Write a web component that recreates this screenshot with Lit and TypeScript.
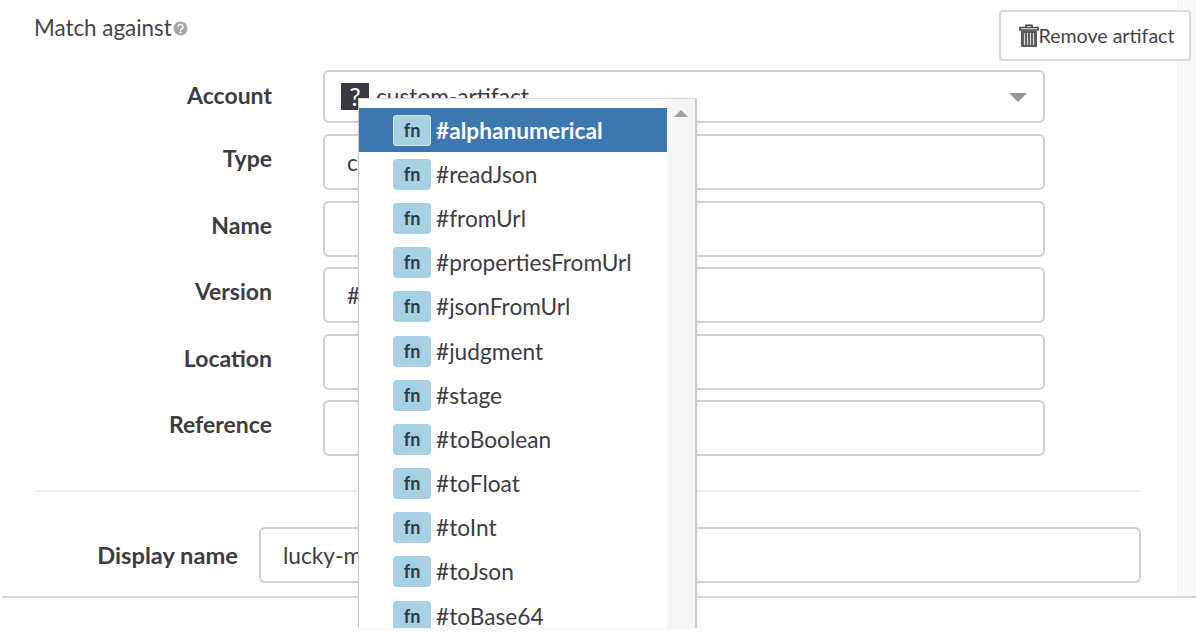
import { LitElement, html, css } from 'lit';
import { customElement } from 'lit/decorators.js';

const FIELDS = [
  { label: 'Type', value: 'c' },
  { label: 'Name', value: '' },
  { label: 'Version', value: '#' },
  { label: 'Location', value: '' },
  { label: 'Reference', value: '' },
];

const OPTIONS = [
  'alphanumerical',
  'readJson',
  'fromUrl',
  'propertiesFromUrl',
  'jsonFromUrl',
  'judgment',
  'stage',
  'toBoolean',
  'toFloat',
  'toInt',
  'toJson',
  'toBase64',
];

@customElement('app-root')
export class AppRoot extends LitElement {
  static styles = css`
    :host {
      display: block;
      position: relative;
      height: 632px;
      overflow: hidden;
      background: #fff;
      color: #3f3b42;
      font-family: 'Lato', 'Noto Sans', sans-serif;
      font-size: 22.7px;
    }

    .page {
      box-sizing: border-box;
      height: 598px;
      margin: 0 4px 0 2px;
      border-bottom: 2px solid #d9d7d5;
      display: flex;
    }

    .content {
      width: 1175px;
      box-sizing: border-box;
      padding: 10px 0 0 32px;
    }

    .gutter {
      width: 19px;
      background: #f7f7f7;
      border-left: 1px solid #efefef;
      box-sizing: border-box;
    }

    /* the remove button sits over the gutter */
    .header {
      position: relative;
      z-index: 1;
      display: flex;
      justify-content: space-between;
      align-items: flex-start;
      height: 60px;
      margin-right: -14px;
    }

    .title {
      display: flex;
      align-items: center;
      gap: 1px;
      margin-top: 6px;
      font-size: 22.4px;
      line-height: 24px;
      color: #46434a;
    }

    .remove {
      box-sizing: border-box;
      width: 192px;
      height: 51px;
      display: flex;
      align-items: center;
      justify-content: center;
      background: #fff;
      border: 2px solid #dcdad8;
      border-radius: 4px;
      font: inherit;
      font-size: 19.6px;
      color: #46434a;
      padding: 0 0 0 3px;
    }

    .form {
      display: flex;
      flex-direction: column;
      gap: 10.5px;
      padding-right: 132px;
    }

    .row {
      display: flex;
      align-items: center;
      height: 56px;
      gap: 51px;
    }

    .row.account {
      height: 53px;
      margin-bottom: 0.5px;
    }

    .label {
      width: 238px;
      box-sizing: border-box;
      padding-bottom: 8px;
      text-align: right;
      font-weight: 700;
      font-size: 23px;
    }

    .account .label {
      padding-bottom: 4px;
    }

    .control {
      flex: 1;
      box-sizing: border-box;
      height: 100%;
      display: flex;
      align-items: center;
      gap: 7px;
      padding-left: 22px;
      background: #fff;
      border: 2px solid #d3d1cf;
      border-radius: 6px;
    }

    .account .control {
      padding-left: 16px;
      padding-right: 16px;
    }

    .unknown {
      width: 28px;
      height: 27px;
      background: #3d3940;
      color: #fff;
      font-size: 25px;
      line-height: 26px;
      text-align: center;
    }

    .caret {
      margin: 2px 0 0 auto;
      width: 0;
      height: 0;
      border-left: 9px solid transparent;
      border-right: 9px solid transparent;
      border-top: 9px solid #9a9794;
    }

    hr {
      margin: 34px 36px 0 0;
      height: 2px;
      border: 0;
      background: #f1f0ef;
    }

    .row.display {
      margin-top: 35px;
      margin-right: 36px;
      gap: 21px;
    }

    .display .label {
      width: 204px;
      padding-bottom: 0;
      font-size: 23.7px;
    }

    .menu {
      position: absolute;
      left: 358px;
      top: 98px;
      width: 339px;
      height: 530px;
      box-sizing: border-box;
      display: flex;
      overflow: hidden;
      background: #fff;
      border: 2px solid #cfccca;
      border-top: 1px solid #dedcda;
      border-bottom: 0;
      border-left-width: 1px;
      box-shadow: 0 0 4px rgba(0, 0, 0, 0.08);
    }

    .options {
      width: 308px;
      flex: none;
      padding-top: 9px;
    }

    .option {
      height: 44.2px;
      display: flex;
      align-items: center;
      gap: 5px;
      padding-left: 34px;
      box-sizing: border-box;
    }

    .option.active {
      background: #3b77b1;
      color: #fff;
      font-weight: 700;
    }

    .fn {
      width: 38px;
      height: 31px;
      flex: none;
      border-radius: 4px;
      background: #a6d1e3;
      color: #2f3a4a;
      font-size: 18px;
      font-weight: 700;
      line-height: 31px;
      text-align: center;
    }

    .active .fn {
      box-shadow: inset 0 0 0 1px #cfe3ee;
    }

    .scroll {
      flex: 1;
      background: #f5f5f5;
      display: flex;
      justify-content: center;
      padding-top: 11px;
    }

    .scroll i {
      width: 0;
      height: 0;
      border-left: 7px solid transparent;
      border-right: 7px solid transparent;
      border-bottom: 7px solid #a09d9a;
    }
  `;

  render() {
    return html`
      <div class="page">
        <div class="content">
          <div class="header">
            <div class="title">
              Match against
              <svg width="15" height="15" viewBox="0 0 15 15">
                <circle cx="7.5" cy="7.5" r="7" fill="#a9a7a5" />
                <path d="M5 5.8a2.5 2.3 0 1 1 3.6 2.1c-.8.4-1.1.8-1.1 1.6" fill="none" stroke="#fff" stroke-width="1.5" />
                <circle cx="7.5" cy="11.6" r="1" fill="#fff" />
              </svg>
            </div>
            <button class="remove">
              <svg width="20" height="23" viewBox="0 0 20 23">
                <path d="M7 3V1.2h6V3M1 3.5h18V6H1z" fill="none" stroke="#46434a" stroke-width="1.6" />
                <path d="M2 7h16v15a1 1 0 0 1-1 1H3a1 1 0 0 1-1-1z" fill="#5a575c" />
                <path d="M5.5 9v12M8.5 9v12M11.5 9v12M14.5 9v12" stroke="#d8d6d4" stroke-width="1.2" />
              </svg>
              Remove artifact
            </button>
          </div>
          <div class="form">
            <div class="row account">
              <div class="label">Account</div>
              <div class="control">
                <span class="unknown">?</span>
                custom-artifact
                <span class="caret"></span>
              </div>
            </div>
            ${FIELDS.map(
              (f) => html`
                <div class="row">
                  <div class="label">${f.label}</div>
                  <div class="control">${f.value}</div>
                </div>
              `
            )}
          </div>
          <hr />
          <div class="row display">
            <div class="label">Display name</div>
            <div class="control">lucky-m</div>
          </div>
        </div>
        <div class="gutter"></div>
      </div>
      <div class="menu">
        <div class="options">
          ${OPTIONS.map(
            (name, i) => html`
              <div class="option ${i === 0 ? 'active' : ''}">
                <span class="fn">fn</span>
                <span>#${name}</span>
              </div>
            `
          )}
        </div>
        <div class="scroll"><i></i></div>
      </div>
    `;
  }
}
